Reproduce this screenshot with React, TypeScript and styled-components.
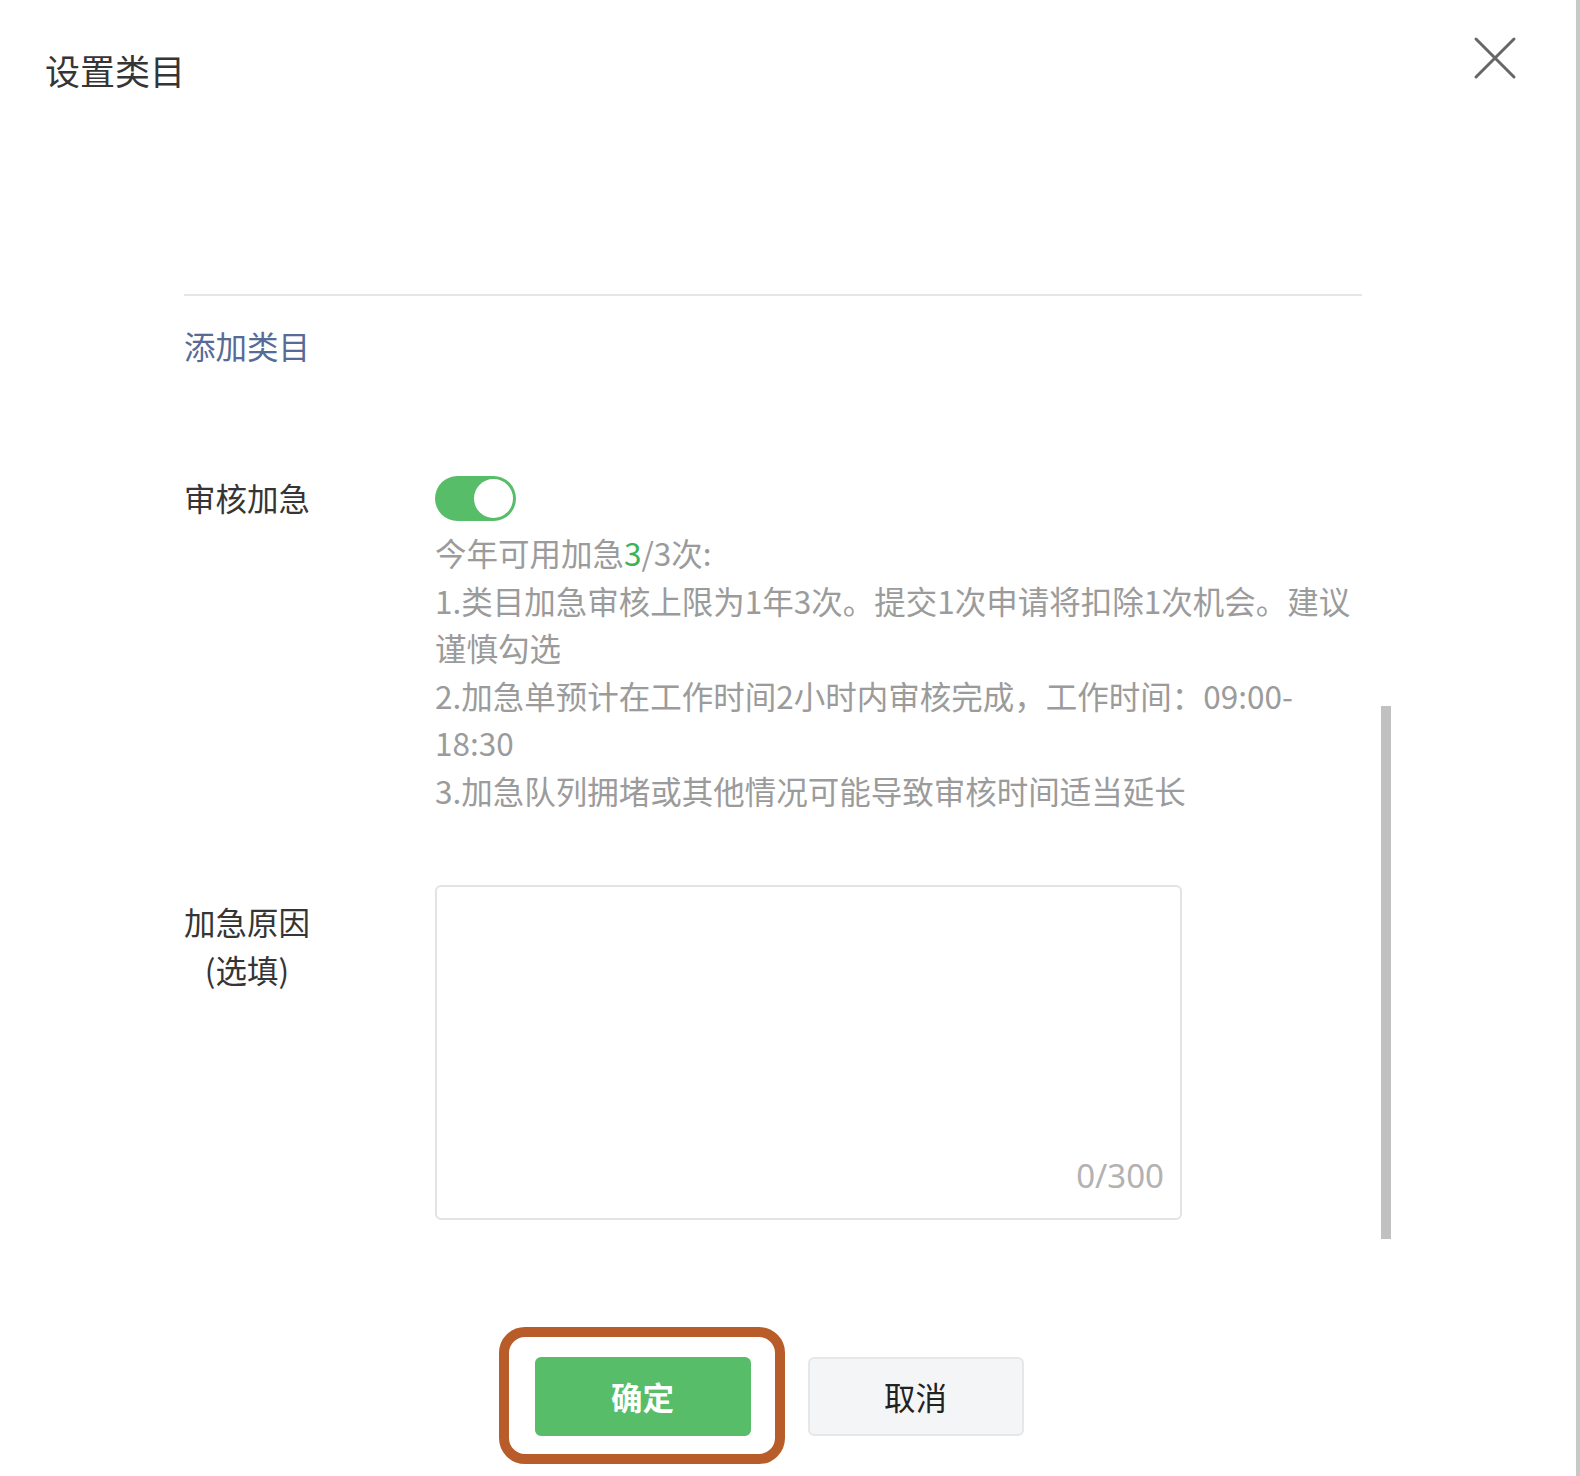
import styled, { createGlobalStyle } from "styled-components"

const GlobalStyle = createGlobalStyle`
  html, body {
    margin: 0;
    padding: 0;
    background: #fff;
  }
  body {
    font-family: "Noto Sans CJK SC", "Noto Sans", "Liberation Sans", sans-serif;
    color: #353535;
  }
`

const Page = styled.div`
  width: 1580px;
  height: 1476px;
  display: flex;
  overflow: hidden;
`

const Dialog = styled.div`
  position: relative;
  flex: 1;
  display: flex;
  flex-direction: column;
  border-right: 4px solid #c8c8c8;
`

const Header = styled.div`
  height: 143px;
  padding: 0 59px 0 45px;
  display: flex;
  justify-content: space-between;
  align-items: flex-start;
`

const Title = styled.h2`
  margin: 46px 0 0;
  font-size: 35px;
  line-height: 48px;
  font-weight: 400;
  color: #353535;
`

const CloseButton = styled.button`
  margin-top: 36px;
  padding: 0;
  border: 0;
  background: none;
  width: 44px;
  height: 44px;
  cursor: pointer;
  color: #666;
`

const Body = styled.div`
  padding: 0 0 0 184px;
  width: 1178px;
`

const CategoryList = styled.div`
  height: 151px;
  border-bottom: 2px solid #e6e6e6;
`

const AddLink = styled.a`
  display: inline-block;
  margin-top: 25px;
  font-size: 31.5px;
  line-height: 48px;
  color: #576b95;
  text-decoration: none;
  cursor: pointer;
`

const FormRow = styled.div<{ $top: number }>`
  display: flex;
  margin-top: ${(p) => p.$top}px;
`

const LabelCol = styled.div`
  width: 251px;
  flex-shrink: 0;
`

const Label = styled.div<{ $offset?: number }>`
  width: fit-content;
  text-align: center;
  font-size: 31.5px;
  line-height: 48px;
  color: #353535;
  margin-top: ${(p) => p.$offset ?? 0}px;
`

const Field = styled.div`
  flex: 1;
  display: flex;
  flex-direction: column;
  align-items: flex-start;
`

const Switch = styled.button<{ $on: boolean }>`
  position: relative;
  margin-top: 3px;
  width: 81px;
  height: 45px;
  padding: 0;
  border: 0;
  border-radius: 23px;
  background: ${(p) => (p.$on ? "#57bd69" : "#e0e0e0")};
  cursor: pointer;

  &::after {
    content: "";
    position: absolute;
    top: 3px;
    left: ${(p) => (p.$on ? "39px" : "3px")};
    width: 39px;
    height: 39px;
    border-radius: 50%;
    background: #fff;
  }
`

const Tips = styled.div`
  margin-top: 8px;
  font-size: 31.5px;
  line-height: 47.6px;
  color: #9b9b9b;
  width: 925px;
`

const Green = styled.span`
  color: #3fb255;
`

const TextBox = styled.div`
  width: 747px;
  height: 335px;
  box-sizing: border-box;
  border: 2px solid #e3e3e3;
  border-radius: 6px;
  display: flex;
  flex-direction: column;
  padding: 14px 16px 19px 20px;
`

const TextInput = styled.textarea`
  flex: 1;
  border: 0;
  outline: none;
  resize: none;
  padding: 0;
  font: inherit;
  font-size: 31.5px;
  color: #353535;
  background: transparent;
`

const Counter = styled.div`
  align-self: flex-end;
  font-family: "Noto Sans", "Noto Sans CJK SC", sans-serif;
  font-size: 33px;
  line-height: 47px;
  color: #b2b2b2;
`

const Thumb = styled.div`
  position: absolute;
  left: 1381px;
  top: 706px;
  width: 10px;
  height: 533px;
  background: #c1c1c1;
`

const Footer = styled.div`
  margin-top: 137px;
  padding-right: 18px;
  display: flex;
  justify-content: center;
  gap: 57px;
`

const Highlight = styled.div`
  position: relative;

  &::after {
    content: "";
    position: absolute;
    inset: -30px -34px -28px -36px;
    border: 10px solid #b85d29;
    border-radius: 26px;
    pointer-events: none;
  }
`

const Button = styled.button<{ $primary?: boolean }>`
  width: 216px;
  height: 79px;
  box-sizing: border-box;
  border-radius: 6px;
  font-family: inherit;
  font-size: 31.5px;
  font-weight: ${(p) => (p.$primary ? 700 : 400)};
  cursor: pointer;
  border: 2px solid ${(p) => (p.$primary ? "#57bd69" : "#e6e7e9")};
  background: ${(p) => (p.$primary ? "#57bd69" : "#f4f5f7")};
  color: ${(p) => (p.$primary ? "#fff" : "#222")};
`

function CloseIcon() {
  return (
    <svg width="44" height="44" viewBox="0 0 44 44" fill="none">
      <path d="M3 3L41 41M41 3L3 41" stroke="currentColor" strokeWidth="3" strokeLinecap="round" />
    </svg>
  )
}

export default function App() {
  return (
    <>
      <GlobalStyle />
      <Page>
        <Dialog>
          <Header>
            <Title>设置类目</Title>
            <CloseButton aria-label="关闭">
              <CloseIcon />
            </CloseButton>
          </Header>

          <Body>
            <CategoryList />
            <AddLink>添加类目</AddLink>

            <FormRow $top={104}>
              <LabelCol>
                <Label>审核加急</Label>
              </LabelCol>
              <Field>
                <Switch $on aria-label="审核加急" />
                <Tips>
                  今年可用加急<Green>3</Green>/3次:
                  <br />
                  1.类目加急审核上限为1年3次。提交1次申请将扣除1次机会。建议谨慎勾选
                  <br />
                  2.加急单预计在工作时间2小时内审核完成，工作时间：09:00-18:30
                  <br />
                  3.加急队列拥堵或其他情况可能导致审核时间适当延长
                </Tips>
              </Field>
            </FormRow>

            <FormRow $top={70}>
              <LabelCol>
                <Label $offset={12}>
                  加急原因
                  <br />
                  (选填)
                </Label>
              </LabelCol>
              <Field>
                <TextBox>
                  <TextInput />
                  <Counter>0/300</Counter>
                </TextBox>
              </Field>
            </FormRow>
          </Body>

          <Footer>
            <Highlight>
              <Button $primary>确定</Button>
            </Highlight>
            <Button>取消</Button>
          </Footer>

          <Thumb />
        </Dialog>
      </Page>
    </>
  )
}
